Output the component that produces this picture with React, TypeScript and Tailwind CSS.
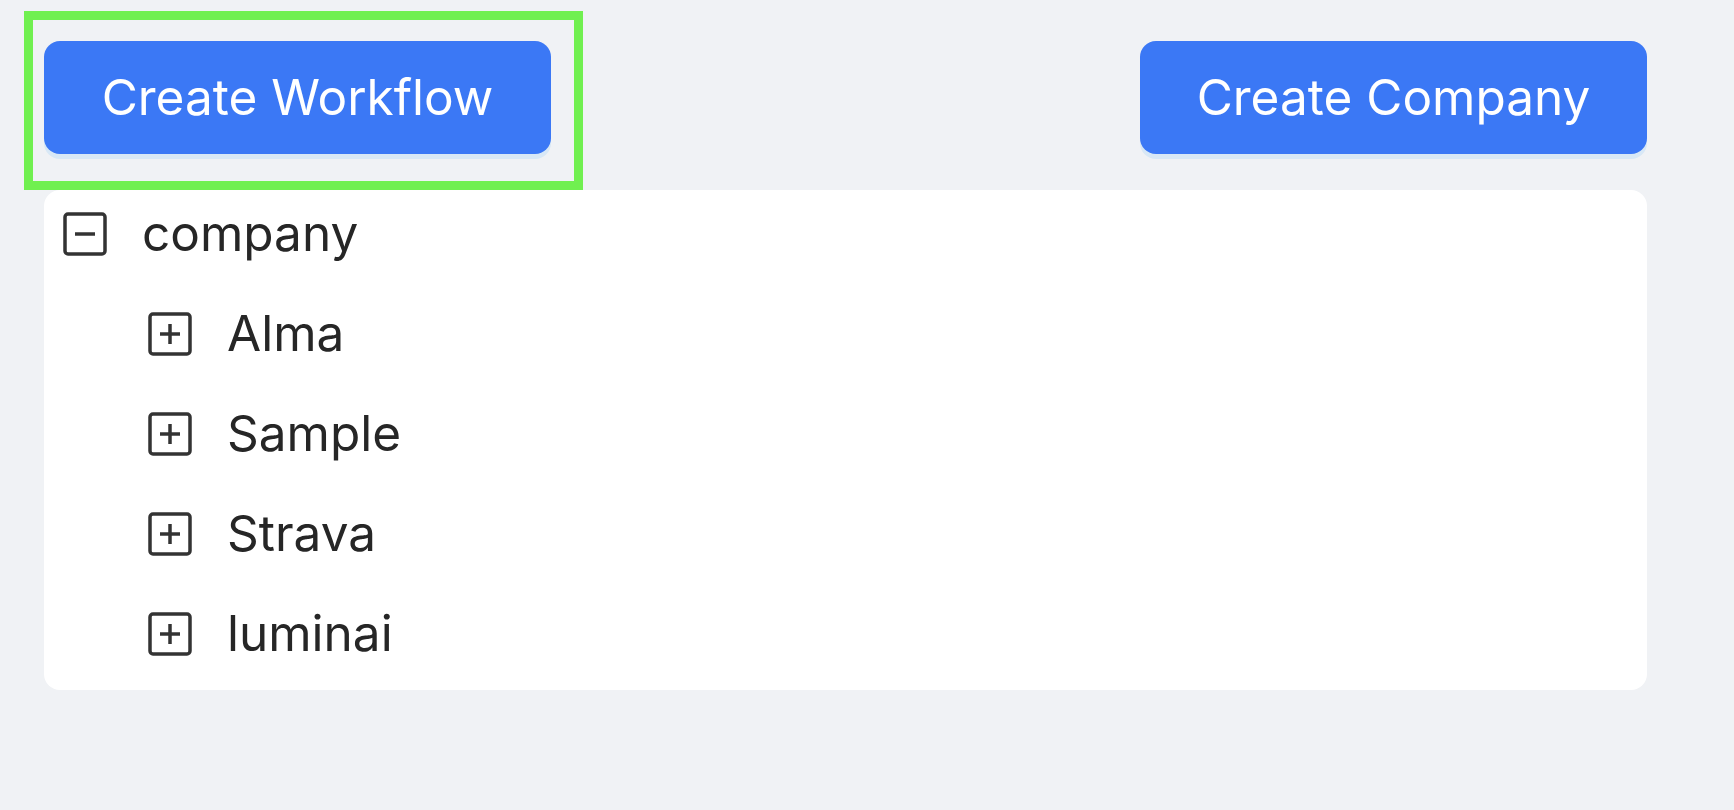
import { ReactNode } from 'react';

function BoxIcon({ open }: { open: boolean }) {
    return (
        <svg width="46" height="46" viewBox="0 0 46 46" fill="none" className="shrink-0">
            <rect x="3" y="3" width="40" height="40" rx="3" stroke="#333" strokeWidth="3.5" />
            <path d="M13 23h20" stroke="#333" strokeWidth="3.5" />
            {!open && <path d="M23 13v20" stroke="#333" strokeWidth="3.5" />}
        </svg>
    );
}

function TreeRow({ open, indent, children }: { open: boolean; indent?: boolean; children: ReactNode }) {
    return (
        <div className={`flex items-center h-14 gap-[34px] ${indent ? 'pl-[85px]' : ''}`}>
            <BoxIcon open={open} />
            <span className="text-[49.5px] text-[#262626] leading-none">{children}</span>
        </div>
    );
}

function PrimaryButton({ children }: { children: ReactNode }) {
    return (
        <button className="h-[113px] w-[507px] rounded-[16px] bg-[#3b78f5] text-white text-[49.5px] shadow-[0_5px_0_rgba(5,145,255,0.1)]">
            {children}
        </button>
    );
}

const COMPANIES = ['Alma', 'Sample', 'Strava', 'luminai'];

export default function App() {
    return (
        <div className="min-h-[810px] w-full bg-[#f0f2f5] pl-[44px] pt-[41px] font-['Inter',_'Liberation_Sans',_sans-serif]">
            <div className="w-[1603px]">
                <div className="flex flex-row justify-between">
                    <div className="relative">
                        <PrimaryButton>Create Workflow</PrimaryButton>
                        {/* highlight */}
                        <div className="absolute -left-[20px] -top-[30px] -right-[32px] -bottom-[36px] border-[9px] border-[#70f050] pointer-events-none" />
                    </div>
                    <PrimaryButton>Create Company</PrimaryButton>
                </div>
                <div className="mt-[36px] h-[500px] rounded-[16px] bg-white pl-[18px] pt-[16px] flex flex-col gap-[44px]">
                    <TreeRow open>company</TreeRow>
                    {COMPANIES.map((name) => (
                        <TreeRow key={name} open={false} indent>
                            {name}
                        </TreeRow>
                    ))}
                </div>
            </div>
        </div>
    );
}
